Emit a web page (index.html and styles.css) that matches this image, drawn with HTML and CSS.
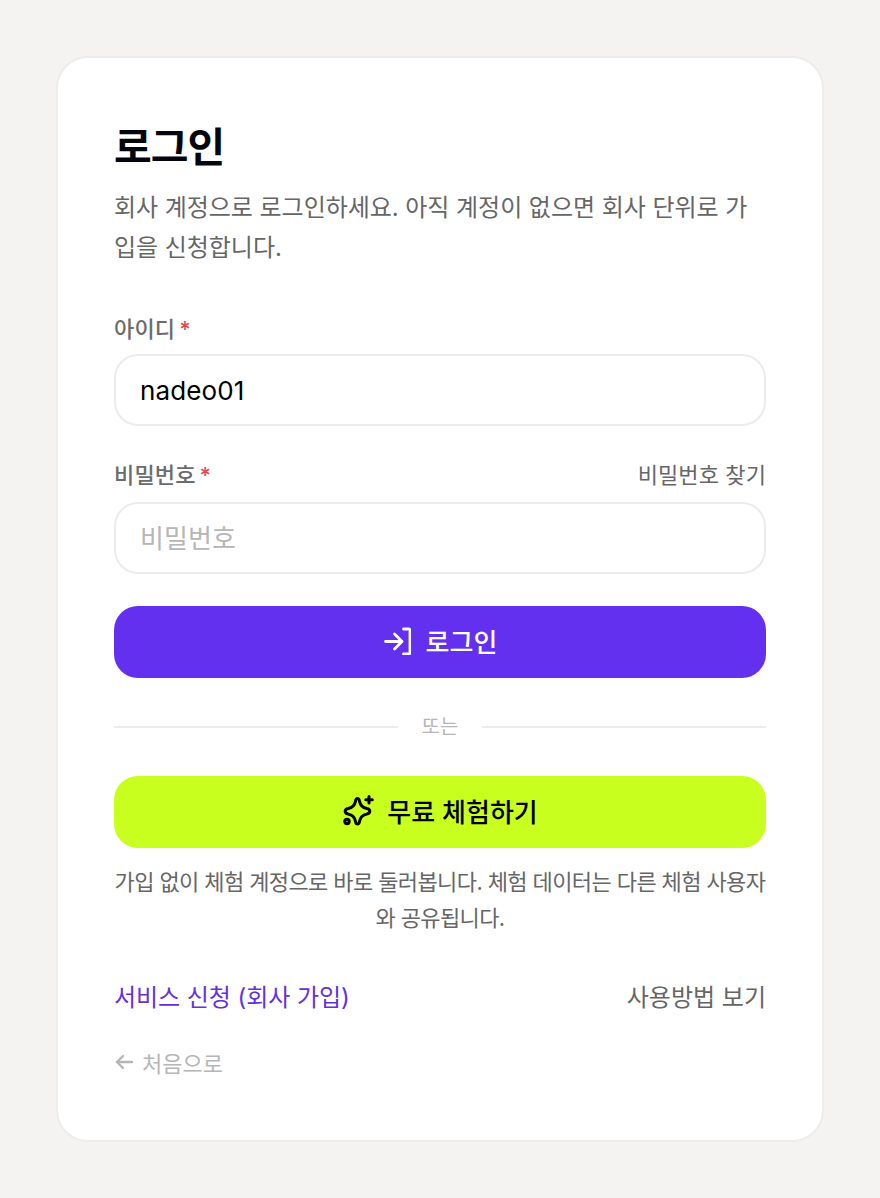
FILE: index.html
```html
<!DOCTYPE html>
<html lang="ko">
<head>
<meta charset="utf-8">
<title>로그인</title>
<link rel="stylesheet" href="styles.css">
</head>
<body>
<main class="card">
  <h1 class="title">로그인</h1>
  <p class="desc">회사 계정으로 로그인하세요. 아직 계정이 없으면 회사 단위로 가입을 신청합니다.</p>
  <form class="form">
    <div class="field field-id">
      <div class="label-row"><label class="label" for="uid">아이디<span class="req">*</span></label></div>
      <input class="input" id="uid" type="text" value="nadeo01">
    </div>
    <div class="field">
      <div class="label-row label-row-pw"><label class="label" for="pw">비밀번호<span class="req">*</span></label><a class="find" href="#">비밀번호 찾기</a></div>
      <input class="input" id="pw" type="text" placeholder="비밀번호">
    </div>
    <button class="btn btn-primary" type="button">
      <svg class="icon-login" viewBox="0 0 28 28" fill="none" stroke="currentColor" stroke-width="2.800" stroke-linecap="round" stroke-linejoin="round"><path d="M2.500 14.500h16"/><path d="M11.500 7l7.500 7.500-7.500 7.500"/><path d="M20.500 2h5a1.500 1.500 0 0 1 1.500 1.500v22a1.500 1.500 0 0 1-1.500 1.500h-5"/></svg>
      로그인
    </button>
  </form>
  <div class="divider"><span class="or">또는</span></div>
  <button class="btn btn-accent" type="button">
    <svg class="icon-spark" viewBox="0 0 32 32" fill="none" stroke="currentColor" stroke-width="3" stroke-linecap="round" stroke-linejoin="round"><path d="M15.500 3.500c1.300 0 1.700 1 2 2.700.8 4.300 2.900 6.400 7.300 7.300 1.700.3 3 1 3 2.800s-1.300 2.500-3 2.800c-4.400.9-6.500 3-7.300 7.300-.3 1.700-.7 2.600-2 2.600s-1.700-.9-2-2.600c-.8-4.300-2.900-6.400-7.300-7.300-1.700-.3-3-1-3-2.800s1.300-2.500 3-2.800c4.400-.9 6.500-3 7.300-7.300.3-1.700.7-2.700 2-2.700z"/><path d="M27 1.500v6.500M23.800 4.800h6.500"/><circle cx="5" cy="26.500" r="2.200"/></svg>
    무료 체험하기
  </button>
  <p class="note">가입 없이 체험 계정으로 바로 둘러봅니다. 체험 데이터는 다른 체험 사용자와 공유됩니다.</p>
  <div class="links">
    <a class="link-signup" href="#">서비스 신청 (회사 가입)</a>
    <a class="link-guide" href="#">사용방법 보기</a>
  </div>
  <a class="back" href="#"><svg class="icon-back" viewBox="0 0 18 16" fill="none" stroke="currentColor" stroke-width="2.400" stroke-linecap="round" stroke-linejoin="round"><path d="M2 8h15"/><path d="M8 2L2 8l6 6"/></svg>처음으로</a>
</main>
</body>
</html>
```
FILE: styles.css
```css
* { box-sizing: border-box; }
html, body { margin: 0; }
body {
  background: #f4f3f1;
  font-family: Inter, "Noto Sans CJK KR", sans-serif;
  padding: 56px 56px;
  color: #000;
}
.card {
  width: 768px;
  height: 1086px;
  background: #fff;
  border: 2px solid #ececec;
  border-radius: 32px;
  padding: 56px;
}
.title {
  margin: 0;
  font-size: 41px;
  font-weight: 700;
  line-height: 66px;
  letter-spacing: -1px;
  color: #050510;
}
.desc {
  margin: 8px 0 0;
  font-size: 24px;
  line-height: 40px;
  letter-spacing: -0.05px;
  color: #666;
}
.form { margin-top: 42px; display: flex; flex-direction: column; }
.field { margin-bottom: 32px; }
.field-id { margin-bottom: 30px; }
.label-row { display: flex; justify-content: space-between; align-items: center; height: 34px; margin-bottom: 10px; }
.label-row-pw { margin-bottom: 12px; }
.label { font-size: 22px; font-weight: 500; color: #6b6b6b; letter-spacing: 0.15px; }
.req { color: #e5484d; margin-left: 4px; }
.find { font-size: 22px; color: #666; text-decoration: none; letter-spacing: 0.1px; }
.input {
  display: block;
  width: 100%;
  height: 72px;
  border: 2px solid #ececec;
  border-radius: 24px;
  padding: 0 24px;
  font: inherit;
  font-size: 26px;
  letter-spacing: 0.1px;
  color: #000;
  background: #fff;
  outline: none;
}
.input::placeholder { color: #b6b6b6; }
.btn {
  display: flex;
  align-items: center;
  justify-content: center;
  gap: 14px;
  width: 100%;
  height: 72px;
  border: 0;
  border-radius: 24px;
  padding: 0 0 3px;
  font: inherit;
  font-size: 26px;
  font-weight: 500;
}
.btn-primary { background: #6430f0; color: #fff; gap: 15px; }
.btn-accent { background: #c8ff1e; color: #000; gap: 13px; }
.icon-login { width: 28px; height: 28px; flex: none; }
.icon-spark { width: 32px; height: 32px; flex: none; }
.divider {
  height: 2px;
  background: #ececec;
  margin: 48px 0;
  display: flex;
  justify-content: center;
  align-items: center;
}
.or { background: #fff; padding: 0 24px 4px; font-size: 20px; color: #b6b6b6; }
.note {
  margin: 16px 0 0;
  text-align: center;
  font-size: 22px;
  line-height: 36px;
  letter-spacing: -0.6px;
  color: #666;
}
.links { display: flex; justify-content: space-between; margin-top: 42px; font-size: 24px; }
.link-signup { color: #6430e0; text-decoration: none; letter-spacing: -0.05px; }
.link-guide { color: #666; text-decoration: none; }
.back { display: flex; align-items: center; gap: 9px; margin-top: 33px; font-size: 22px; color: #b6b6b6; text-decoration: none; }
.icon-back { width: 18px; height: 16px; margin-left: 1px; flex: none; }
```
